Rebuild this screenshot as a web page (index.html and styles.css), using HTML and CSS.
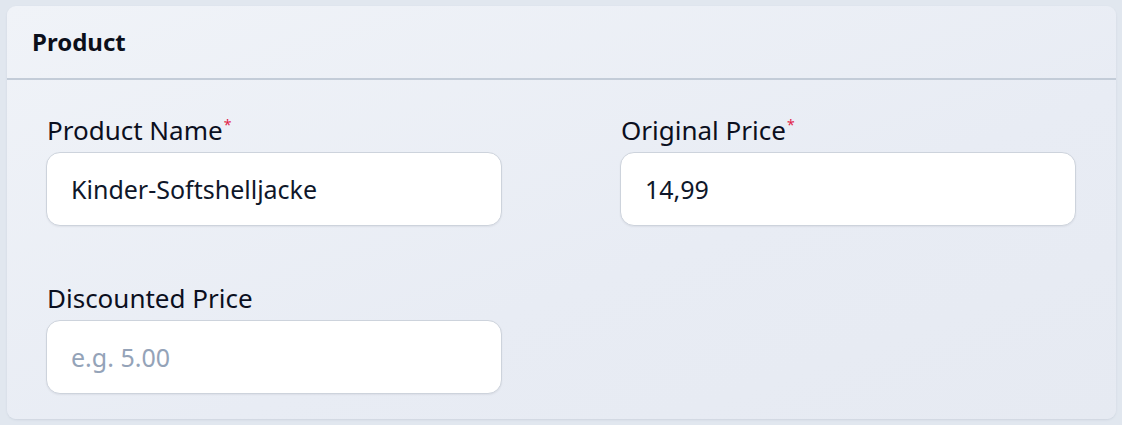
FILE: index.html
```html
<!DOCTYPE html>
<html lang="en">
<head>
<meta charset="utf-8">
<title>Product</title>
<link rel="stylesheet" href="styles.css">
</head>
<body>
  <section class="card">
    <header class="card-header">
      <h2 class="card-title">Product</h2>
    </header>
    <div class="card-body">
      <div class="field">
        <label class="field-label" for="name">Product Name<span class="req">*</span></label>
        <input class="field-input" id="name" type="text" value="Kinder-Softshelljacke">
      </div>
      <div class="field">
        <label class="field-label" for="price">Original Price<span class="req">*</span></label>
        <input class="field-input" id="price" type="text" value="14,99">
      </div>
      <div class="field">
        <label class="field-label" for="disc">Discounted Price</label>
        <input class="field-input" id="disc" type="text" placeholder="e.g. 5.00">
      </div>
    </div>
  </section>
</body>
</html>
```
FILE: styles.css
```css
* { box-sizing: border-box; }
html, body { margin: 0; }
body {
  background: #e1e7ef;
  font-family: "Noto Sans", "Open Sans", sans-serif;
  color: #0f172a;
  padding: 6px 6px 6px 7px;
  height: 425px;
}
.card {
  width: 1109px;
  height: 413px;
  border-radius: 9px;
  background: linear-gradient(160deg, #f0f3f8 0%, #e8ecf4 60%, #e6eaf2 100%);
  box-shadow: 0 1px 2px rgba(100, 116, 139, 0.15);
  overflow: hidden;
}
.card-header {
  height: 74px;
  border-bottom: 2px solid #c3ccd8;
  display: flex;
  align-items: center;
  padding-left: 25px;
}
.card-title {
  margin: 0;
  font-size: 24px;
  font-weight: 700;
  color: #0b0f1a;
  line-height: 30px;
}
.card-body {
  display: grid;
  grid-template-columns: 456px 456px;
  column-gap: 118px;
  row-gap: 57px;
  padding: 35px 41px 0 39px;
}
.field {
  display: flex;
  flex-direction: column;
  gap: 7px;
}
.field-label {
  font-size: 26px;
  line-height: 30px;
  color: #0b0f1e;
  padding-left: 1px;
}
.req {
  color: #e11d48;
  font-size: 14px;
  vertical-align: top;
  position: relative;
  top: -5px;
  margin-left: 1px;
}
.field-input {
  height: 74px;
  width: 100%;
  border: 1.5px solid #cdd3dc;
  border-radius: 14px;
  background: #fff;
  box-shadow: 0 1px 2px rgba(15, 23, 42, 0.06);
  padding: 0 24px;
  font-family: "Noto Sans", "Open Sans", sans-serif;
  font-size: 25px;
  color: #0f172a;
  outline: none;
}
.field-input::placeholder {
  color: #94a3b8;
}
```
